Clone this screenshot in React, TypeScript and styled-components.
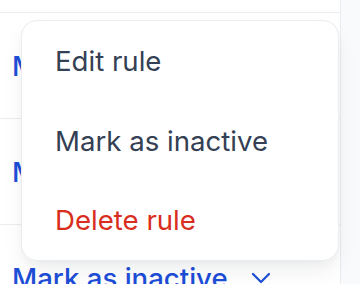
import React from "react";
import styled, { createGlobalStyle } from "styled-components";

const Global = createGlobalStyle`
  html, body { margin: 0; padding: 0; background: #ffffff; }
  body { font-family: Inter, "Noto Sans", sans-serif; -webkit-font-smoothing: antialiased; }
  * { box-sizing: border-box; }
`;

const Page = styled.div`
  position: relative;
  display: flex;
  width: 360px;
  height: 284px;
  overflow: hidden;
  background: #ffffff;
`;

const Table = styled.div`
  width: 341px;
  flex: none;
  padding-top: 12px;
  border-right: 1px solid #eaecf0;
  background: #ffffff;
`;

const Side = styled.div`
  flex: 1;
  background: #f9fafb;
`;

const Row = styled.div`
  display: flex;
  align-items: center;
  height: 106px;
  padding-left: 12px;
  border-top: 1px solid #eaecf0;
`;

const ActionButton = styled.button`
  display: flex;
  align-items: center;
  gap: 23px;
  padding: 0;
  border: none;
  background: none;
  font-family: Inter, sans-serif;
  font-size: 27.6px;
  font-weight: 500;
  line-height: 34px;
  color: #1d4ed8;
  cursor: pointer;
`;

const Menu = styled.div`
  position: absolute;
  top: 20px;
  left: 21px;
  width: 318px;
  height: 241px;
  display: flex;
  flex-direction: column;
  background: #ffffff;
  border: 1px solid #eaecf0;
  border-radius: 16px;
  box-shadow: 0 12px 24px -4px rgba(16, 24, 40, 0.08), 0 4px 8px -2px rgba(16, 24, 40, 0.04);
`;

const MenuItem = styled.div<{ $danger?: boolean }>`
  display: flex;
  align-items: center;
  height: 80px;
  padding-left: 33px;
  font-size: 27.6px;
  font-weight: 400;
  color: ${(p) => (p.$danger ? "#d92d20" : "#344054")};
`;

const Chevron = () => (
  <svg width="20" height="12" viewBox="0 0 20 12" fill="none">
    <path d="M2 2l8 8 8-8" stroke="#1d4ed8" strokeWidth="2.2" strokeLinecap="round" strokeLinejoin="round" />
  </svg>
);

const Action = () => (
  <ActionButton>
    Mark as inactive
    <Chevron />
  </ActionButton>
);

export default function App() {
  return (
    <Page>
      <Global />
      <Table>
        <Row><Action /></Row>
        <Row><Action /></Row>
        <Row><Action /></Row>
      </Table>
      <Side />
      <Menu>
        <MenuItem>Edit rule</MenuItem>
        <MenuItem>Mark as inactive</MenuItem>
        <MenuItem $danger>Delete rule</MenuItem>
      </Menu>
    </Page>
  );
}
